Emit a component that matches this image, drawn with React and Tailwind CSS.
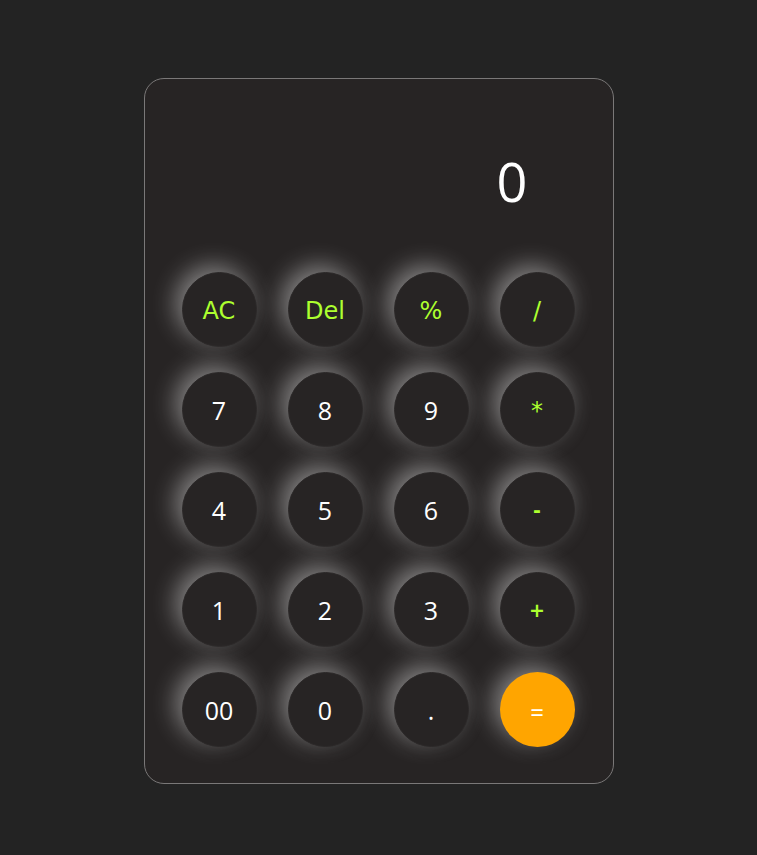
import React from "react";

const rows = [
  [["AC", "op"], ["Del", "op"], ["%", "op"], ["/", "op"]],
  [["7", "num"], ["8", "num"], ["9", "num"], ["*", "op"]],
  [["4", "num"], ["5", "num"], ["6", "num"], ["-", "sm"]],
  [["1", "num"], ["2", "num"], ["3", "num"], ["+", "sm"]],
  [["00", "num"], ["0", "num"], [".", "num"], ["=", "eq"]],
];

function Btn({ label, kind }) {
  const base =
    "w-[75px] h-[75px] rounded-full flex items-center justify-center shadow-[-6px_-6px_24px_rgba(255,255,255,0.45),4px_4px_14px_rgba(0,0,0,0.12)]";
  if (kind === "eq") {
    return (
      <div className={`${base} bg-[#ffa500] text-white text-[24px] font-['Noto_Sans',sans-serif]`}>
        <span className="translate-y-[2px]">{label}</span>
      </div>
    );
  }
  if (kind === "op" || kind === "sm") {
    return (
      <div
        className={`${base} bg-[#272424] border border-[#2c2929] text-[#adff2f] ${
          kind === "sm" ? "text-[19px] font-bold" : "text-[24px]"
        } font-['Comic_Sans_MS','DejaVu_Sans',sans-serif]`}
      >
        <span className="translate-y-[1px]">{label}</span>
      </div>
    );
  }
  return (
    <div
      className={`${base} bg-[#272424] border border-[#2c2929] text-white text-[25px] font-['Open_Sans','Noto_Sans',sans-serif]`}
    >
      <span className="translate-y-[1px]">{label}</span>
    </div>
  );
}

export default function App() {
  return (
    <div className="min-h-[855px] w-full bg-[#232323] flex justify-center pt-[78px]">
      <div className="w-[470px] h-[706px] rounded-[20px] border border-[#7a7878] bg-[#272424] flex flex-col">
        <div className="h-[193px] flex items-start justify-end pr-[85px] pt-[75px]">
          <span className="text-white text-[54px] leading-none font-['Open_Sans','Noto_Sans',sans-serif]">
            0
          </span>
        </div>
        <div className="grid grid-cols-[repeat(4,75px)] gap-x-[31px] gap-y-[25px] pl-[37px]">
          {rows.flat().map(([l, k], i) => (
            <Btn key={i} label={l} kind={k} />
          ))}
        </div>
      </div>
    </div>
  );
}
